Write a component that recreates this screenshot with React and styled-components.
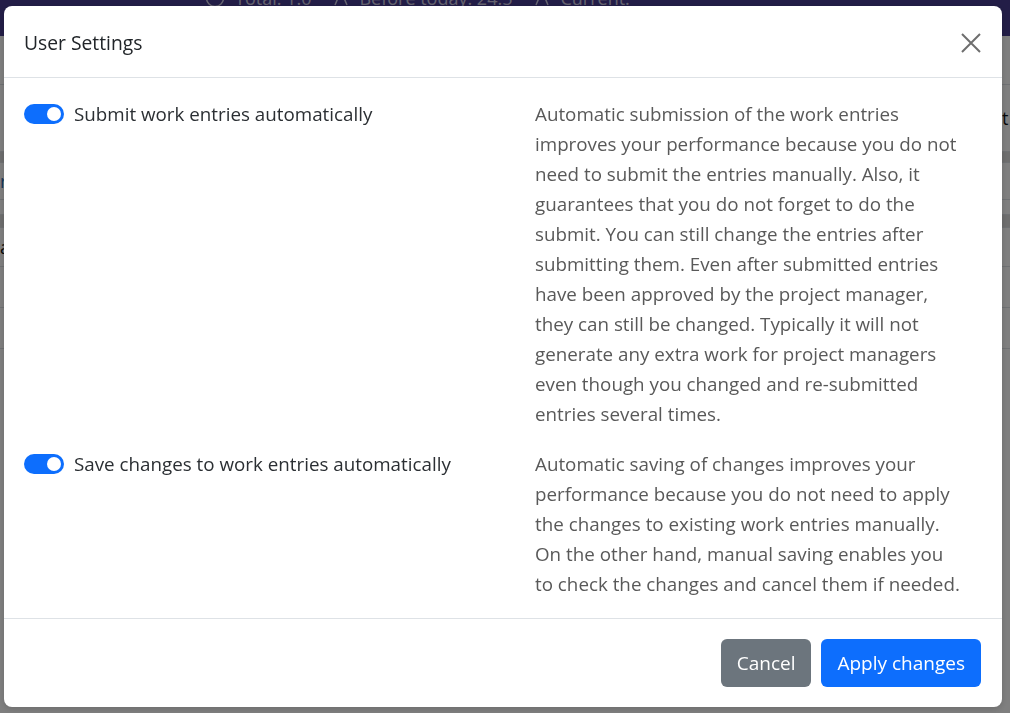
import styled, { createGlobalStyle } from "styled-components";

const GlobalStyle = createGlobalStyle`
  html, body {
    margin: 0;
    padding: 0;
    height: 100%;
  }
  body {
    font-family: "Open Sans", "Noto Sans", sans-serif;
    background: #ffffff;
    color: #212529;
    overflow: hidden;
  }
`;

const SETTINGS = [
  {
    id: "autoSubmit",
    label: "Submit work entries automatically",
    text:
      "Automatic submission of the work entries improves your performance because you do not need to submit the entries manually. Also, it guarantees that you do not forget to do the submit. You can still change the entries after submitting them. Even after submitted entries have been approved by the project manager, they can still be changed. Typically it will not generate any extra work for project managers even though you changed and re-submitted entries several times.",
  },
  {
    id: "autoSave",
    label: "Save changes to work entries automatically",
    text:
      "Automatic saving of changes improves your performance because you do not need to apply the changes to existing work entries manually. On the other hand, manual saving enables you to check the changes and cancel them if needed.",
  },
];

// rows of the table that sits behind the dialog (only the edges show)
const ROWS = [
  { h: 48 },
  { h: 66, right: "t" },
  { h: 10, band: true },
  { h: 36, left: "r", link: true },
  { h: 14 },
  { h: 12, band: true },
  { h: 38, left: "a" },
  { h: 40 },
  { h: 40 },
];

export default function App() {
  return (
    <>
      <GlobalStyle />
      <Page>
        <NavBar>
          <NavItems>
            <NavItem>
              <svg width="20" height="20" viewBox="0 0 20 20">
                <circle cx="10" cy="10" r="8.5" fill="none" stroke="currentColor" strokeWidth="1.5" />
                <line x1="6" y1="10" x2="14" y2="10" stroke="currentColor" strokeWidth="1.5" />
              </svg>
              Total: 1.0
            </NavItem>
            <NavItem>
              <svg width="16" height="20" viewBox="0 0 16 20">
                <path d="M8 3 L14 17 M8 3 L2 17 M5 11 L8 8 L11 11" fill="none" stroke="currentColor" strokeWidth="1.5" />
              </svg>
              Before today: 24.5
            </NavItem>
            <NavItem>
              <svg width="16" height="20" viewBox="0 0 16 20">
                <path d="M8 3 L14 17 M8 3 L2 17 M5 11 L8 8 L11 11" fill="none" stroke="currentColor" strokeWidth="1.5" />
              </svg>
              Current:
            </NavItem>
          </NavItems>
        </NavBar>
        <Table>
          {ROWS.map((r, i) => (
            <TableRow key={i} $band={r.band} style={{ height: r.h }}>
              <Cell $link={r.link}>{r.left}</Cell>
              <Cell $right>{r.right}</Cell>
            </TableRow>
          ))}
        </Table>
      </Page>

      <Backdrop>
        <Dialog role="dialog" aria-modal="true" aria-label="User Settings">
          <Header>
            <Title>User Settings</Title>
            <CloseBtn type="button" aria-label="Close">
              <svg width="22" height="22" viewBox="0 0 22 22">
                <path d="M2 2 L20 20 M20 2 L2 20" stroke="currentColor" strokeWidth="2" />
              </svg>
            </CloseBtn>
          </Header>

          <Body>
            {SETTINGS.map((s) => (
              <SettingRow key={s.id}>
                <SwitchLabel>
                  <Switch $on aria-checked="true" role="switch">
                    <Knob />
                  </Switch>
                  <LabelText>{s.label}</LabelText>
                </SwitchLabel>
                <Description>{s.text}</Description>
              </SettingRow>
            ))}
          </Body>

          <Footer>
            <Button type="button" $variant="secondary">
              Cancel
            </Button>
            <Button type="button" $variant="primary">
              Apply changes
            </Button>
          </Footer>
        </Dialog>
      </Backdrop>
    </>
  );
}

/* ================= page behind ================= */

const Page = styled.div`
  width: 100%;
  min-height: 100vh;
  background: #ffffff;
`;

const NavBar = styled.header`
  height: 36px;
  background: #463b8e;
  color: rgba(255, 255, 255, 0.72);
  overflow: hidden;
`;

const NavItems = styled.div`
  display: flex;
  align-items: center;
  gap: 22px;
  padding-left: 205px;
  margin-top: -14px;
  font-size: 18px;
  line-height: 24px;
`;

const NavItem = styled.span`
  display: inline-flex;
  align-items: center;
  gap: 10px;
`;

const Table = styled.div`
  display: flex;
  flex-direction: column;
`;

const TableRow = styled.div`
  display: flex;
  justify-content: space-between;
  align-items: center;
  border-bottom: 1px solid #dee2e6;
  background: ${(p) => (p.$band ? "#dcdcdc" : "#ffffff")};
`;

const Cell = styled.div`
  font-size: 18px;
  color: ${(p) => (p.$link ? "#2a6fb5" : "#111")};
  width: ${(p) => (p.$right ? "8px" : "auto")};
  overflow: hidden;
  white-space: nowrap;
`;

/* ================= modal ================= */

const Backdrop = styled.div`
  position: fixed;
  inset: 0;
  background: rgba(0, 0, 0, 0.5);
  display: flex;
  align-items: flex-start;
  padding: 6px 8px 0 4px;
  z-index: 1050;
`;

const Dialog = styled.div`
  width: 998px;
  background: #ffffff;
  border-radius: 8px;
  display: flex;
  flex-direction: column;
  box-shadow: 0 2px 6px rgba(0, 0, 0, 0.15);
`;

const Header = styled.div`
  display: flex;
  align-items: center;
  justify-content: space-between;
  padding: 22px 20px 19px;
  border-bottom: 1px solid #dee2e6;
`;

const Title = styled.h5`
  margin: 0;
  font-size: 19.3px;
  line-height: 30px;
  font-weight: 500;
  color: #212529;
`;

const CloseBtn = styled.button`
  border: none;
  background: transparent;
  padding: 0;
  width: 22px;
  height: 22px;
  color: #6e6e6e;
  cursor: pointer;
  display: grid;
  place-items: center;
`;

const Body = styled.div`
  padding: 21px 20px 19px;
  display: flex;
  flex-direction: column;
  gap: 20px;
`;

const SettingRow = styled.div`
  display: grid;
  grid-template-columns: 487px 429px;
  column-gap: 24px;
  font-size: 18.8px;
  line-height: 30px;
`;

const SwitchLabel = styled.label`
  display: flex;
  align-items: flex-start;
  gap: 10px;
`;

const Switch = styled.span`
  flex: 0 0 auto;
  width: 40px;
  height: 20px;
  margin-top: 5px;
  border-radius: 10px;
  background: ${(p) => (p.$on ? "#0d6efd" : "#ffffff")};
  display: flex;
  align-items: center;
  justify-content: ${(p) => (p.$on ? "flex-end" : "flex-start")};
  padding: 0 3px;
  box-sizing: border-box;
`;

const Knob = styled.span`
  width: 14px;
  height: 14px;
  border-radius: 50%;
  background: #ffffff;
`;

const LabelText = styled.span`
  color: #2b2f33;
`;

const Description = styled.p`
  margin: 0;
  color: #595959;
`;

const Footer = styled.div`
  display: flex;
  justify-content: flex-end;
  gap: 10px;
  padding: 20px 21px 20px 20px;
  border-top: 1px solid #dee2e6;
`;

const Button = styled.button`
  height: 48px;
  padding: 0 16px;
  border: none;
  border-radius: 6px;
  font-family: inherit;
  font-size: 19px;
  color: #ffffff;
  cursor: pointer;
  background: ${(p) => (p.$variant === "primary" ? "#0d6efd" : "#6c757d")};
`;
